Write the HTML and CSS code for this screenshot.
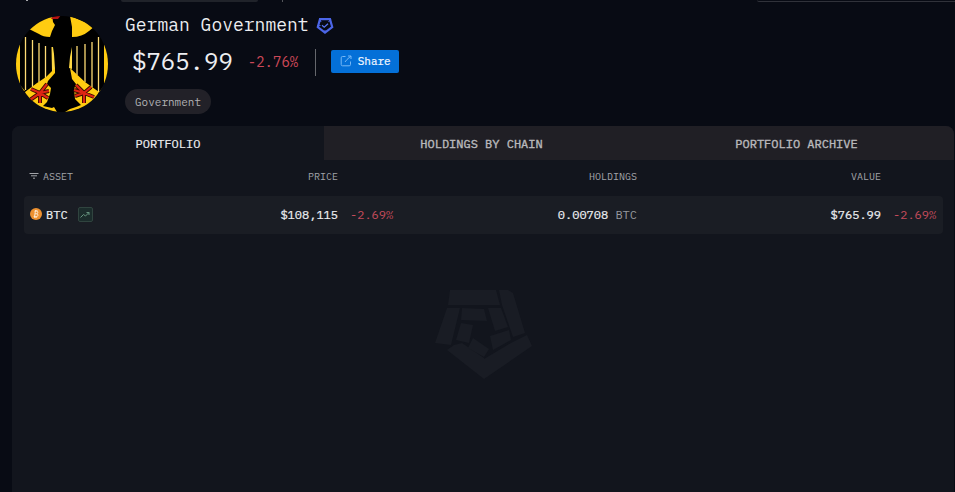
FILE: index.html
```html
<!DOCTYPE html>
<html lang="en">
<head>
    <meta charset="UTF-8">
    <meta name="viewport" content="width=device-width, initial-scale=1.0">
    <title>German Government</title>
    <link rel="stylesheet" href="styles.css">
</head>
<body>
    <div class="topbar">
        <div class="topbar-mark"></div>
        <div class="topbar-button"></div>
        <div class="topbar-divider"></div>
        <div class="topbar-search"></div>
    </div>

    <header class="entity">
        <svg class="avatar" viewBox="0 0 96 96">
            <defs>
                <clipPath id="circle"><ellipse cx="47" cy="48" rx="46" ry="48"/></clipPath>
            </defs>
            <g clip-path="url(#circle)">
                <rect width="96" height="96" fill="#000"/>
                <!-- gold field around the head and at the sides -->
                <path d="M12 12L37 -2L38 6L40 9L37 15L35 21Q28 21 24 18L18 15ZM55 0L80 10L74 15Q67 21 57 21L57 11ZM0 22H5V69L10 75L0 75ZM89 22H96V75L84 76L89 70Z" fill="#fc1"/>
                <!-- feathers -->
                <path d="M10.500 21V74M17.500 24V71M24 27V66M30.500 30V62M62 30V59M70 28V66M77 26V71M83.500 21V76" stroke="#ffdc75" stroke-width="1.300"/>
                <path d="M36.500 31H38L39 38L40 53L37 56ZM57 31V53L54 52L55 41Z" fill="#ffd843"/>
                <!-- feet -->
                <path d="M40 52V57L33 65L32 68L36 72L35 78L32 86L28 90L37 92L39 91L42 96H30L11 82L10 76L22 67L31 61ZM55 52L70 66L84 76L78 88L65 95L50 96L55 93L61 91L66 89L60 83L59 73L61 68L57 63Z" fill="#fc1"/>
                <path d="M36 3L38 0L46 -1L43 3Z" fill="#b41212"/>
                <!-- claws -->
                <path d="M25 77L32 68M25 77L16 73M25 77L15 84M25 77V87M25 77L33 82M25 77L34 75M69 77L61 69M69 77L76 71M69 77L79 81M69 77V87M69 77L60 80M69 77L59 74" stroke="#3a0c00" stroke-width="4"/>
                <path d="M25 77L32 68M25 77L16 73M25 77L15 84M25 77V87M25 77L33 82M25 77L34 75M69 77L61 69M69 77L76 71M69 77L79 81M69 77V87M69 77L60 80M69 77L59 74" stroke="#dd2413" stroke-width="2.200"/>
            </g>
        </svg>
        <div class="entity-info">
            <h1 class="entity-name">
                German Government
                <svg class="verified" viewBox="0 0 18 18" fill="none">
                    <path d="M4 2.200H14L16.200 10L9 15.500L1.800 10Z" stroke="#4c66e8" stroke-width="2.200"/>
                    <path d="M3.500 1L5 5M15 2L12.500 5M1 9L4.500 8.500M9 16V13" stroke="#4c66e8" stroke-width="1"/>
                    <path d="M6 8.200L8.200 10.200L12 6.700" stroke="#5977f4" stroke-width="1.200"/>
                </svg>
            </h1>
            <div class="balance-row">
                <span class="balance">$765.99</span>
                <span class="balance-change">-2.76%</span>
                <button class="share-button">
                    <svg class="share-icon" viewBox="0 0 12 12" fill="none" stroke="currentColor">
                        <path d="M5.500 1.500H2.500Q1.200 1.500 1.200 2.800V9.500Q1.200 10.800 2.500 10.800H9.200Q10.500 10.800 10.500 9.500V6.500M5 7L7 4.500L11 1M8 1H11V4"/>
                    </svg>
                    <span class="share-label">Share</span>
                </button>
            </div>
            <span class="tag">Government</span>
        </div>
    </header>

    <main class="panel">
        <nav class="tabs">
            <div class="tab active">PORTFOLIO</div>
            <div class="tab">HOLDINGS BY CHAIN</div>
            <div class="tab">PORTFOLIO ARCHIVE</div>
        </nav>
        <div class="table-row table-head">
            <div class="asset">
                <svg class="filter-icon" viewBox="0 0 10 8" stroke="currentColor">
                    <path d="M0.500 1.500H9.500M2 3.800H8M4 6.200H6"/>
                </svg>
                ASSET
            </div>
            <div class="amount">PRICE</div>
            <div></div>
            <div class="amount">HOLDINGS</div>
            <div class="amount">VALUE</div>
            <div></div>
        </div>
        <div class="table-row table-item">
            <div class="asset">
                <svg class="coin" viewBox="0 0 12 12">
                    <circle cx="6" cy="6" r="6" fill="#ed9130"/>
                    <path d="M4.500 3.200H6.600Q8.100 3.300 7.800 4.700Q7.600 5.500 6.800 5.700Q8.200 6 7.900 7.400Q7.600 8.700 6.100 8.700H4L4.300 7.700M5.300 3.300L4.600 8.600M4.900 5.800H6.800M5.600 2V3.200M6.900 2V3.300M4.800 8.700V10M6.100 8.700V10" fill="none" stroke="#fff0dc" stroke-width="0.900"/>
                </svg>
                BTC
                <span class="chart-badge">
                    <svg viewBox="0 0 10 8" fill="none" stroke="currentColor">
                        <path d="M0.500 6.500L3.500 3.500L5.500 5L9 1.500M6.500 1.500H9V4"/>
                    </svg>
                </span>
            </div>
            <div class="amount">$108,115</div>
            <div class="change">-2.69%</div>
            <div class="amount">0.00708 <span class="unit">BTC</span></div>
            <div class="amount">$765.99</div>
            <div class="change">-2.69%</div>
        </div>
        <svg class="watermark" viewBox="0 0 100 92">
            <!-- outer ring -->
            <path d="M16 1H62L66 16H14ZM65 1H74L79 4L91 44L79 48L68 16ZM13 19H26L17 56L1 54ZM20 56L28 54L50 69V90L13 61ZM93 46L98 57L50 90V70L77 54Z"/>
            <!-- inner ring -->
            <path d="M28 19L50 20L53 32L27 31ZM54 19H67L74 38L61 42ZM56 47L75 41L77 51L59 61ZM39 49L55 60L50 68L34 59ZM27 34L39 36L35 54L22 51Z"/>
        </svg>
    </main>
</body>
</html>
```
FILE: styles.css
```css
* {
    box-sizing: border-box;
}
body {
    font-family: "IBM Plex Mono", "Liberation Mono", monospace;
    background-color: #080b14;
    color: #edeef1;
    margin: 0;
    height: 492px;
    overflow: hidden;
}
.topbar {
    display: flex;
    align-items: flex-start;
    height: 15px;
    padding-left: 26px;
}
.topbar-mark {
    width: 2px;
    height: 1px;
    background-color: #a5a7ab;
}
.topbar-button {
    width: 137px;
    height: 2px;
    margin-left: 93px;
    background-color: #20232a;
    border-radius: 0 0 3px 3px;
}
.topbar-divider {
    width: 1px;
    height: 2px;
    margin-left: 24px;
    background-color: #54565b;
}
.topbar-search {
    flex: 1;
    height: 2px;
    margin-left: 474px;
    border-bottom: 1px solid #30323a;
    border-radius: 0 0 0 2px;
}
.entity {
    display: flex;
    height: 111px;
    padding-left: 15px;
}
.avatar {
    width: 96px;
    height: 96px;
    margin-top: 1px;
}
.entity-info {
    margin-left: 14px;
}
.entity-name {
    display: flex;
    align-items: center;
    gap: 7px;
    height: 18px;
    margin: 0;
    font-size: 18px;
    font-weight: normal;
}
.verified {
    width: 18px;
    height: 18px;
    margin-top: 3px;
}
.balance-row {
    display: flex;
    align-items: center;
    height: 26px;
    margin-top: 16px;
    padding-left: 7px;
}
.balance {
    margin-top: -2px;
    font-size: 24px;
}
.balance-change {
    display: flex;
    align-items: center;
    height: 27px;
    margin-left: 15px;
    padding-right: 17px;
    border-right: 1px solid #65676c;
    color: #cc4858;
    font-size: 14px;
}
.share-button {
    display: flex;
    align-items: center;
    justify-content: center;
    gap: 6px;
    width: 68px;
    height: 23px;
    margin: -1px 0 0 15px;
    padding: 0 0 1px;
    border: none;
    border-radius: 2px;
    background-color: #0470d8;
    color: #f4f8ff;
    font-family: inherit;
    font-size: 11px;
    cursor: pointer;
}
.share-label {
    -webkit-text-stroke: 0.2px;
}
.share-icon {
    width: 12px;
    height: 12px;
    color: #77b8f6;
}
.tag {
    display: flex;
    align-items: center;
    justify-content: center;
    width: 86px;
    height: 25px;
    margin-top: 14px;
    border-radius: 13px;
    background-color: #222128;
    color: #b1b1b4;
    font-size: 11px;
}
.panel {
    height: 366px;
    margin: 0 1px 0 12px;
    border-radius: 8px 8px 0 0;
    background-color: #12151d;
    overflow: hidden;
}
.tabs {
    display: grid;
    grid-template-columns: 312px 315px 315px;
    height: 34px;
}
.tab {
    display: flex;
    align-items: center;
    justify-content: center;
    background-color: #201f25;
    color: #b9b9bc;
    font-size: 12px;
    -webkit-text-stroke: 0.4px;
}
.tab.active {
    background-color: #12151d;
    color: #edeef1;
    -webkit-text-stroke: 0.2px;
}
.table-row {
    display: grid;
    grid-template-columns: 150px 164px 57px 242px 244px 57px;
    align-items: center;
    margin: 0 11px 0 12px;
}
.table-head {
    height: 33px;
    color: #a2a4a9;
    font-size: 10px;
}
.table-item {
    height: 38px;
    margin-top: 3px;
    padding-bottom: 2px;
    border-radius: 4px;
    background-color: #1a1d24;
    font-size: 12px;
}
.asset {
    display: flex;
    align-items: center;
    padding-left: 5px;
}
.filter-icon {
    width: 10px;
    height: 8px;
    margin: -2px 4px 0 0;
}
.coin {
    width: 12px;
    height: 12px;
    margin: 0 4px 0 1px;
}
.chart-badge {
    display: flex;
    align-items: center;
    justify-content: center;
    width: 15px;
    height: 15px;
    margin: 1px 0 0 10px;
    border: 1px solid #30443f;
    border-radius: 2px;
    background-color: #1b2c2b;
    color: #65937e;
}
.chart-badge svg {
    width: 10px;
    height: 8px;
}
.amount {
    text-align: right;
}
.table-item .asset,
.table-item .amount {
    -webkit-text-stroke: 0.2px;
}
.table-item .unit {
    color: #96989d;
    -webkit-text-stroke: 0;
}
.change {
    padding-left: 12px;
    color: #c44b5b;
}
.watermark {
    display: block;
    width: 100px;
    height: 92px;
    margin: 55px 0 0 422px;
    fill: #191c24;
}
```
